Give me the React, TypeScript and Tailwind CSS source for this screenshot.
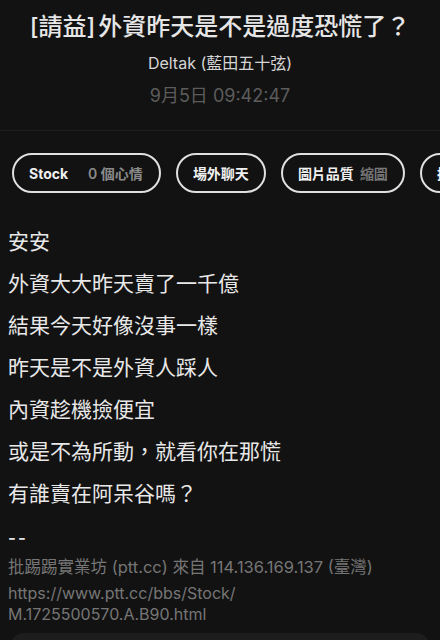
import React from "react";

const font = { fontFamily: 'Inter, "Noto Sans CJK TC", "Noto Sans", sans-serif' };

export default function App() {
  const lines = [
    "安安",
    "外資大大昨天賣了一千億",
    "結果今天好像沒事一樣",
    "昨天是不是外資人踩人",
    "內資趁機撿便宜",
    "或是不為所動，就看你在那慌",
    "有誰賣在阿呆谷嗎？",
  ];
  return (
    <div className="w-[440px] h-[640px] overflow-hidden bg-[#121212]" style={font}>
      <div className="pt-[11px] pb-[21px] border-b border-[#1e1e1e] flex flex-col items-center">
        <div className="text-[24px] leading-[32px] font-medium text-[#e6e6e6] whitespace-nowrap">
          [請益]<span className="ml-[3px]">外資昨天是不是過度恐慌了？</span>
        </div>
        <div className="mt-[8px] text-[16px] leading-[24px] text-[#d6d6d6]">Deltak (藍田五十弦)</div>
        <div className="mt-[8px] text-[18px] leading-[26px] text-[#5c5c5c]">9月5日 09:42:47</div>
      </div>
      <div className="pt-[22px] pl-[12px] flex gap-[15px] overflow-hidden whitespace-nowrap">
        <div className="h-[40px] shrink-0 rounded-full border-2 border-[#e0e0e0] pl-[15px] pr-[16px] flex items-center text-[14px] font-bold">
          <span className="text-[#f0f0f0]">Stock</span>
          <span className="ml-[20px] text-[#8a8a8a] font-semibold">0 個心情</span>
        </div>
        <div className="h-[40px] shrink-0 rounded-full border-2 border-[#e0e0e0] px-[15px] flex items-center text-[14px] font-bold text-[#f0f0f0]">
          場外聊天
        </div>
        <div className="h-[40px] shrink-0 rounded-full border-2 border-[#e0e0e0] px-[15px] flex items-center text-[14px] font-bold">
          <span className="text-[#f0f0f0]">圖片品質</span>
          <span className="ml-[6px] text-[#777777] font-semibold">縮圖</span>
        </div>
        <div className="h-[40px] shrink-0 rounded-full border-2 border-[#e0e0e0] px-[15px] flex items-center text-[14px] font-bold text-[#f0f0f0]">
          排序 預設
        </div>
      </div>
      <div className="mt-[28px] px-[8px]">
        {lines.map((l, i) => (
          <div key={i} className="text-[21px] leading-[42px] text-[#e8e8e8]">
            {l}
          </div>
        ))}
        <div className="mt-[11px] text-[17px] leading-[24px] text-[#e0e0e0] font-semibold tracking-[2px]">--</div>
        <div className="mt-[6px] text-[16.5px] leading-[22px] text-[#767676] whitespace-nowrap">
          批踢踢實業坊 (ptt.cc) 來自 114.136.169.137 (臺灣)
        </div>
        <div className="mt-[5px] text-[16px] leading-[21px] text-[#767676]">
          https://www.ptt.cc/bbs/Stock/
          <br />
          M.1725500570.A.B90.html
        </div>
      </div>
      <div className="mt-[8px] mx-[10px] h-[60px] rounded-[14px] bg-[#1d1d1d]" />
    </div>
  );
}
